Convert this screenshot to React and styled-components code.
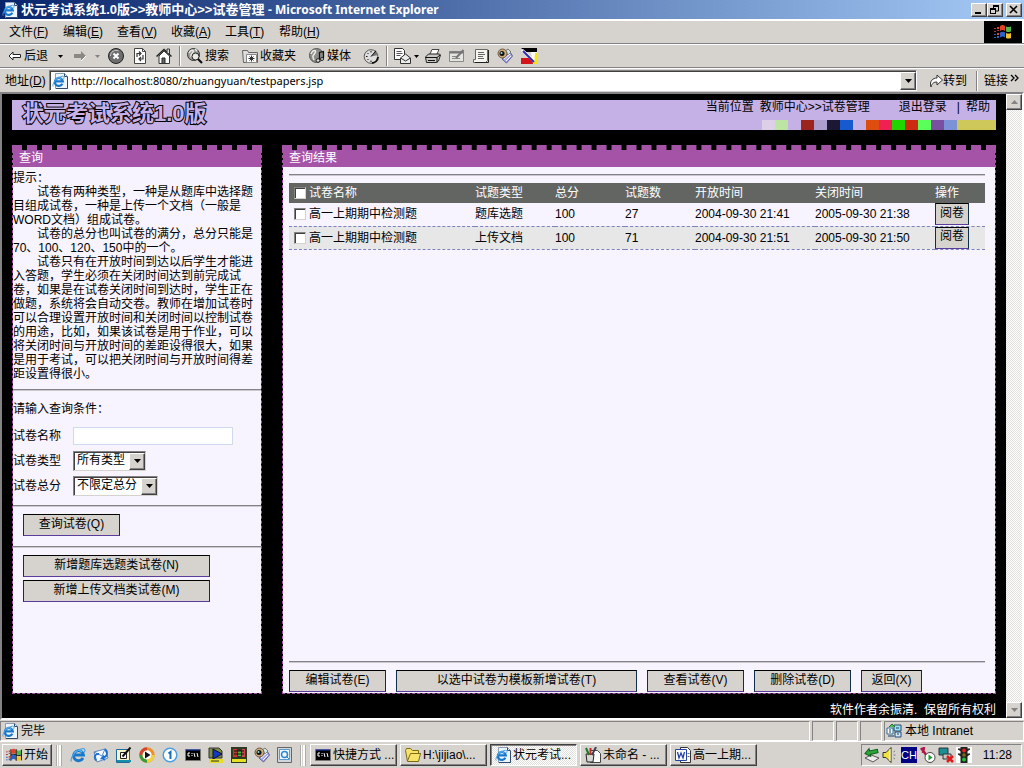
import React from 'react';
import styled, { createGlobalStyle, css } from 'styled-components';

const Global = createGlobalStyle`
  * { box-sizing: border-box; }
  body { margin: 0; font: 12px/14px "Liberation Sans", "Noto Sans CJK SC", sans-serif; color: #000; text-spacing-trim: space-all; }
  button, input, select { font: inherit; color: inherit; margin: 0; border-radius: 0; }
`;

const face = '#d6d3ce';
const raised = css`
  border: 1px solid; border-color: #fff #404040 #404040 #fff;
  box-shadow: inset -1px -1px #848284;
`;
const sunken = css`
  border: 1px solid; border-color: #848284 #fff #fff #848284;
`;

const Screen = styled.div`
  display: flex; flex-direction: column; min-height: 100vh; background: ${face};
`;
const TitleBar = styled.header`
  display: flex; align-items: center; gap: 3px; height: 19px; padding: 0 2px;
  background: linear-gradient(90deg, #08246b, #a5cbf7); color: #fff;
  font-size: 12px; font-weight: bold;
`;
const TitleText = styled.h1`
  flex: 1; margin: 0; font-size: 13px; line-height: 18px; font-weight: bold; white-space: nowrap;
`;
const AppName = styled.span`font: bold 12px/18px "Noto Sans", sans-serif;`;
const WindowButton = styled.button`
  ${raised} display: grid; place-items: center; width: 16px; height: 14px; padding: 0;
  background: ${face}; margin-left: ${p => (p.$apart ? '0' : '-3px')};
`;
const Bar = styled.div`
  display: flex; align-items: center; height: 24px;
  border-top: 1px solid #fff; border-bottom: 1px solid #848284;
`;
const MenuBar = styled(Bar)`
  height: 25px; border-top: 2px solid #fff; align-items: stretch;
`;
const MenuItem = styled.button`
  min-width: 54px; padding: 0 0 0 9px; border: 0; background: none; text-align: left; white-space: nowrap;
`;
const Throbber = styled.div`
  display: grid; place-items: center; width: 40px; margin-left: auto; background: #000;
  border: solid #fff; border-width: 0 2px 0 0;
`;
const ToolBar = styled(Bar)`padding-left: 8px;`;
const Tool = styled.button`
  display: flex; align-items: center; gap: 2px; width: ${p => p.$w || 24}px; padding: 0;
  border: 0; background: none; white-space: nowrap; text-align: left;
`;
const Divider = styled.span`
  width: 2px; height: 20px; margin: 0 6px 0 0; border-left: 1px solid #848284; border-right: 1px solid #fff;
`;
const AddressBar = styled(Bar)`padding-left: 5px; border-bottom: 0;`;
const AddressLabel = styled.label`width: 44px; white-space: nowrap;`;
const AddressField = styled.div`
  display: flex; align-items: center; flex: 1; height: 21px; padding-left: 2px; background: #fff;
  border: 1px solid; border-color: #848284 #fff #fff #848284; box-shadow: inset 1px 1px #404040;
`;
const AddressInput = styled.input`
  flex: 1; min-width: 0; height: 17px; padding: 0 0 0 3px; border: 0; background: transparent; outline: 0;
  font: 11px/16px "Noto Sans", sans-serif;
`;
const DropButton = styled.button`
  ${raised} display: grid; place-items: center; width: 16px; height: 18px; padding: 0; background: ${face};
`;
const GoButton = styled(Tool)`margin-left: 12px; width: 47px; gap: 0;`;
const Viewport = styled.main`
  display: flex; flex: 1; border: 2px solid; border-color: #848284 #fff #fff #848284; background: #000;
`;
const Page = styled.div`
  flex: 1; min-width: 0; display: flex; flex-direction: column; padding: 6px 10px 0;
`;
const ScrollBar = styled.div`
  display: flex; flex-direction: column; justify-content: space-between; width: 16px;
  background: repeating-conic-gradient(#fff 0 25%, #e2e0dc 0 50%) 0 0 / 2px 2px;
`;
const ScrollButton = styled.button`
  ${raised} display: grid; place-items: center; width: 16px; height: 16px; padding: 0; background: ${face};
`;
const Banner = styled.div`
  display: flex; justify-content: space-between; height: 30px; margin-bottom: 15px; background: #c6b1e7;
`;
const Brand = styled.div`
  padding-left: 10px; font-size: 22px; line-height: 28px; font-weight: bold; color: #c6b1e7;
  -webkit-text-stroke: 2px #000; paint-order: stroke fill; white-space: nowrap;
`;
const BannerSide = styled.div`
  display: flex; flex-direction: column; justify-content: space-between; align-items: flex-end; white-space: nowrap;
`;
const Crumbs = styled.nav`display: flex; padding-right: 6px;`;
const Crumb = styled.span`margin-right: ${p => p.$gap}px;`;
const PageLink = styled.a`color: #000; text-decoration: none;`;
const Swatches = styled.div`display: flex; height: 10px;`;
const Swatch = styled.i`width: 13px; background: ${p => p.$c};`;

const Panels = styled.div`display: flex; flex: 1; gap: 20px;`;
const Panel = styled.section`
  display: flex; flex-direction: column; background: #f7f3ff; background-clip: padding-box;
  border: 1px dashed #a553a7; border-top: 5px dashed #a553a7;
  ${p => (p.$side ? 'width: 250px;' : 'flex: 1; min-width: 0;')}
`;
const PanelTitle = styled.h2`
  margin: 0; height: 17px; padding-left: 6px; background: #a553a7; color: #fff;
  font-size: 12px; line-height: 17px; font-weight: normal;
`;
const Rule = styled.hr`
  width: 100%; height: 2px; margin: 7px 0; border: 0; border-top: 1px solid #848284; background: #cdc9d2;
`;
const Tips = styled.div`padding: 4px 0 1px; p { margin: 0; text-indent: 24px; } p:first-child { text-indent: 0; }`;
const FormTitle = styled.p`margin: 4px 0 7px;`;
const Field = styled.div`display: flex; align-items: center; height: 25px;`;
const FieldLabel = styled.label`width: 60px;`;
const TextInput = styled.input`
  width: 160px; height: 18px; padding: 0 2px; border: 1px solid #cedbef; background: #fff;
`;
const SelectBox = styled.span`
  display: grid; width: ${p => p.$w}px; height: 20px; align-items: stretch;
  > * { grid-area: 1 / 1; }
`;
const Select = styled.select`
  appearance: none; width: 100%; padding: 0 0 2px 3px; background: #fff; border: 1px solid;
  border-color: #848284 #d6d3ce #d6d3ce #848284; box-shadow: inset 1px 1px #404040;
`;
const SelectArrow = styled.span`
  ${raised} display: grid; place-items: center; justify-self: end; width: 16px; margin: 2px 1px 1px 0;
  background: ${face}; pointer-events: none;
`;
const PageButton = styled.button`
  width: ${p => p.$w}px; height: 22px; padding: 0 0 3px; background: ${face}; white-space: nowrap;
  border: 1px solid; border-color: #000 #10304a #5a3c9c #10304a;
`;
const Stack = styled.div`display: flex; flex-direction: column; gap: 3px; padding: 0 10px; margin-bottom: ${p => p.$after || 0}px;`;
const Results = styled.div`
  display: flex; flex-direction: column; flex: 1; padding: 0 10px 1px 6px;
`;
const Actions = styled.div`display: flex; gap: 10px;`;
const Spring = styled.div`flex: 1;`;
const Table = styled.table`
  width: 100%; table-layout: fixed; border-collapse: collapse;
  th, td { padding: 0; text-align: left; font-weight: normal; white-space: nowrap; vertical-align: middle; }
`;
const HeadRow = styled.tr`height: 20px; background: #636563; color: #fff;`;
const Row = styled.tr`
  height: 23px; border-bottom: 1px dashed #7b82bd; background: ${p => (p.$alt ? '#e7e7e7' : 'transparent')};
`;
const Check = styled.label`display: flex; align-items: center; gap: 3px; padding-left: 5px;`;
const CheckBox = styled.input`
  appearance: none; width: 12px; height: 12px; background: #fff; border: 1px solid;
  border-color: #848284 #d6d3ce #d6d3ce #848284; box-shadow: inset 1px 1px #404040;
`;
const Copyright = styled.footer`color: #fff; text-align: right; line-height: 14px; padding: 9px 0 1px;`;

const StatusBar = styled.div`display: flex; gap: 2px; height: 21px; padding-top: 1px;`;
const Pane = styled.div`
  ${sunken} display: flex; align-items: center; gap: 3px; padding: 0 1px;
  ${p => (p.$w ? `width: ${p.$w}px;` : 'flex: 1;')}
`;
const TaskBar = styled.footer`
  display: flex; align-items: center; height: 27px; padding: 0 2px; border-top: 1px solid #fff;
`;
const StartButton = styled.button`
  ${raised} display: flex; align-items: center; gap: 2px; width: 50px; height: 22px; padding: 0 3px; background: ${face}; white-space: nowrap;
`;
const Grip = styled.span`
  width: 6px; height: 21px; margin: 0 4px; border-left: 2px groove #fff; border-right: 3px ridge #fff;
`;
const Quick = styled.button`
  display: grid; place-items: center; width: 23px; height: 20px; padding: 0; border: 0; background: none;
`;
const Tasks = styled.div`display: flex; flex: 1; gap: 3px;`;
const Task = styled.button`
  ${raised} display: flex; align-items: center; gap: 2px; width: 87px; height: 22px; padding: 0 2px 0 4px; text-align: left;
  background: ${face}; white-space: nowrap; overflow: hidden;
  ${p => p.$on && css`
    border-color: #404040 #fff #fff #404040; box-shadow: inset 1px 1px #848284;
    background: repeating-conic-gradient(#fff 0 25%, #e2e0dc 0 50%) 0 0 / 2px 2px;
  `}
`;
const Tray = styled.div`
  ${sunken} display: flex; align-items: center; gap: 2px; width: 161px; height: 22px; padding: 0 9px 0 2px;
`;
const Lang = styled.span`width: 16px; height: 16px; margin: 0 1px; background: #000084; color: #fff; text-align: center; line-height: 16px; font-size: 11px;`;
const Clock = styled.time`margin-left: auto;`;

const Svg = ({ w = 16, h = 16, children }) => (
  <svg width={w} height={h} viewBox={`0 0 ${w} ${h}`} fill="none" aria-hidden="true" style={{ flexShrink: 0 }}>{children}</svg>
);
const Caret = ({ color = '#000' }) => <Svg w={7} h={4}><path d="M0 0h7L3.5 4z" fill={color} /></Svg>;
const SmallCaret = ({ color = '#000' }) => <Svg w={5} h={3}><path d="M0 0h5L2.500 3z" fill={color} /></Svg>;

const EGlyph = () => (
  <>
    <path d="M13 11a5 5 0 1 1 .5-3H5" stroke="#1878cc" strokeWidth="2.800" />
    <path d="M4 6a5 5 0 0 1 8-1" stroke="#63c3f7" strokeWidth="1.200" />
    <path d="M1.500 14.500C-.5 12 5 3 13 1.500c3 0 2 2.500 1 4" stroke="#4a9fe0" strokeWidth="1.200" />
  </>
);
const IEIcon = () => <Svg><EGlyph /></Svg>;
const IEPage = () => (
  <Svg>
    <path d="M3.500.5h9l3 3v12h-12z" fill="#eef4fc" stroke="#8c9db8" /><path d="M12.500.5v3h3M15.500 4v11.500H4" stroke="#31496b" />
    <g transform="translate(0 2) scale(.8)"><EGlyph /></g>
  </Svg>
);
const Flag = ({ w = 18 }) => (
  <svg width={w} height="16" viewBox="0 0 18 16" aria-hidden="true">
    <path d="M6 2c2-1.500 3.500-1.500 5 0v5c-2-1.300-3-1.300-5 0z" fill="#e0442a" />
    <path d="M12 2.500c2 .8 3 .8 5 0v5c-2 .8-3 .8-5 0z" fill="#53b848" />
    <path d="M6 8.500c2-1.300 3.500-1.300 5 0v5c-2-1.300-3-1.300-5 0z" fill="#2d62c8" />
    <path d="M12 9c2 .8 3 .8 5 0v5c-2 .8-3 .8-5 0z" fill="#f3c52b" />
    <path d="M5.500 1.500v13M11.500 1.500v13M17.500 2v12M5.500 8c3-1.500 4-1 6 0s4 .8 6 0" stroke="#000" fill="none" />
    <path d="M3 3h2v2H3zM3 9h2v2H3z" fill="#e0442a" /><path d="M0 4h2v1H0zM0 7h2v1H0zM3 6h2v1H3z" fill="#a33" />
    <path d="M0 10h2v1H0zM3 12h2v2H3zM0 13h2v1H0z" fill="#2d62c8" />
  </svg>
);
const BackIcon = () => <Svg w={14}><path d="M1 8l4-4v2.500h7.500v3H5V12z" fill="#fff" stroke="#222" /></Svg>;
const ForwardIcon = () => <Svg w={14}><path d="M13 8L8 3v3H1v4h7v3z" fill="#8a8885" /><path d="M8 13l5-5" stroke="#fff" /></Svg>;
const StopIcon = () => (
  <Svg><circle cx="8" cy="8" r="7.500" fill="#6d6d6d" stroke="#222" /><path d="M2.500 8a5.500 5.500 0 0 1 8-5" stroke="#ccc" />
    <path d="M5.500 5.500l5 5M10.500 5.500l-5 5" stroke="#fff" strokeWidth="2" /></Svg>
);
const RefreshIcon = () => (
  <Svg><path d="M2.500.5h8l3 3v12h-11z" fill="#fff" stroke="#444" /><path d="M10.500.5v3h3" stroke="#444" />
    <path d="M5 9V5.500h3M7 3.500l2 2-2 2M11 7v4H8M9 9l-2 2 2 2" stroke="#333" strokeWidth="1.200" /></Svg>
);
const HomeIcon = () => (
  <Svg><path d="M3 8v7.500h10.500V8L8 3z" fill="#fff" stroke="#333" /><path d="M.5 8.500L8 1.500l7.500 7" stroke="#222" strokeWidth="1.500" />
    <path d="M11 4V1h2.500v5" stroke="#333" fill="#ddd" /><path d="M6 15v-5h3v5" fill="#666" stroke="#222" /></Svg>
);
const SearchIcon = () => (
  <Svg><circle cx="6.500" cy="6.500" r="6" fill="#9b9b97" stroke="#333" /><path d="M2 5c2-4 5-3 4-1s-3 3-2 5M8 1l2 2" stroke="#eee" strokeWidth="1.500" />
    <circle cx="8.500" cy="8.500" r="3.500" fill="#e9e9e6" stroke="#222" /><path d="M11 11l4 4" stroke="#111" strokeWidth="2.200" /></Svg>
);
const FavoritesIcon = () => (
  <Svg><path d="M.5 2.500h5l1 2h9v10H1.500z" fill="#ddd" stroke="#666" /><path d="M4.500 6.500h10v8h-10z" fill="#fff" stroke="#888" />
    <path d="M9.500 7.500v6M6.500 10.500h6M7.500 8.500l4 4M11.500 8.500l-4 4" stroke="#333" /></Svg>
);
const MediaIcon = () => (
  <Svg><circle cx="7.500" cy="7.500" r="7" fill="#8b8b88" stroke="#555" /><path d="M2 6c2-5 6-4 4-1s-3 3-1 7" stroke="#eee" strokeWidth="1.500" />
    <path d="M10.500 12V4.500l4-1v7" stroke="#111" strokeWidth="1.200" /><circle cx="9" cy="12.500" r="1.800" fill="#ddd" stroke="#222" /><circle cx="13" cy="11" r="1.500" fill="#ddd" stroke="#222" /></Svg>
);
const HistoryIcon = () => (
  <Svg><circle cx="8" cy="8.500" r="6.800" fill="#dedede" stroke="#555" /><path d="M8 8.500L12.500 2l3 5z" fill="#777" />
    <path d="M8 3v1.500M3 8.500h1.500M8 12.500V14M4.500 5l1 1M4.500 12l1-1M8 8.500L13 3" stroke="#111" /><path d="M9 15a6.500 6.500 0 0 0 6-6" stroke="#111" strokeWidth="2" /></Svg>
);
const MailIcon = () => (
  <Svg w={18}><path d="M.5.5h8l2 2v9H.5z" fill="#fff" stroke="#333" /><path d="M2.500 3.500h5M2.500 5.500h6M2.500 7.500h4" stroke="#555" />
    <path d="M6.500 10l5-4 5 4v5.500h-10z" fill="#ececec" stroke="#333" /><path d="M6.500 10l5 3 5-3" stroke="#333" /></Svg>
);
const PrintIcon = () => (
  <Svg><path d="M5 6l2-4.500h7L12 6" fill="#fff" stroke="#444" /><path d="M.5 9l3-3h11l1 1-2 6-2 1.500H1.500z" fill="#c7c7c3" stroke="#222" />
    <path d="M1 9.500h11l3-2.500M12 9.500v5M3 12.500h7" stroke="#111" /></Svg>
);
const EditIcon = () => (
  <Svg><path d="M.5 3.500h14v10H.5z" fill="#e4e4e0" stroke="#888" /><path d="M.5 4.500h14" stroke="#777" strokeWidth="2" />
    <path d="M3 8.500h5M3 10.500h8" stroke="#888" /><path d="M7 10l7.500-8" stroke="#777" strokeWidth="2" /></Svg>
);
const NotesIcon = () => (
  <Svg><path d="M2.500 1.500h12v11l-2 2H.5v-3h2z" fill="#f4f4f1" stroke="#666" /><path d="M5 4.500h6M5 6.500h7M5 8.500h5M5 10.500h6" stroke="#666" /><path d="M15.500 2v12.500H2" stroke="#222" /></Svg>
);
const ContactIcon = () => (
  <Svg><path d="M5 11l8-7 2.500 4-6 7z" fill="#a9a9e8" stroke="#5b5b9b" /><path d="M8 3l3-2 3 3-3 3z" fill="#cfe8e4" stroke="#777" /><path d="M7 11l6-5M9 13l5-5" stroke="#fff" />
    <circle cx="5.500" cy="5.500" r="4.500" fill="#c9ad7d" stroke="#6b5540" /><circle cx="5" cy="5.500" r="2.500" fill="#111" /><circle cx="4.500" cy="5" r="1" fill="#8fe7e0" /></Svg>
);
const PaintIcon = () => (
  <Svg><path d="M0 0h16v4H5z" fill="#000" /><path d="M0 10h13v6H0z" fill="#d3141a" /><path d="M10 4h6v12h-4z" fill="#fff" /><path d="M14 5h2v11h-3z" fill="#f7e51c" />
    <path d="M1 2l12 11" stroke="#fff" strokeWidth="3" /><path d="M2 3l11 11" stroke="#2d2bb5" strokeWidth="2" /></Svg>
);
const GoIcon = () => <Svg w={14}><path d="M2 14c-2-6 2-9 6-9V2l5.500 5L8 12V9c-3 0-5 1-6 5z" fill="#fff" stroke="#333" /></Svg>;
const OutlookIcon = () => (
  <Svg><path d="M1 5l11-3 3 9-11 4z" fill="#f5faff" stroke="#5c86c4" /><path d="M1 5l8 4 3-7" stroke="#5c86c4" />
    <path d="M3 13.500c-3-4 0-7 3-6.500M12 2c3 3 3 8-3 9l2-2.500M9 11l3 2" stroke="#1970d0" strokeWidth="1.800" /></Svg>
);
const DesktopIcon = () => (
  <Svg><path d="M.5 2.500h13v13H.5z" fill="#f8f4c8" stroke="#1d6a9c" /><path d="M1 13h14v2H1z" fill="#1590a8" /><path d="M4.500 5.500h6v6h-6z" fill="#fff" stroke="#222" /><path d="M6.500 9.500l8-9" stroke="#111" strokeWidth="2" /></Svg>
);
const PlayerIcon = () => (
  <Svg><circle cx="8" cy="8" r="6.200" stroke="#e8902c" strokeWidth="3" fill="#fff" /><path d="M8 14.200A6.200 6.200 0 0 1 1.800 8" stroke="#3a9a3c" strokeWidth="3" /><path d="M1.800 8A6.200 6.200 0 0 1 8 1.800" stroke="#d3462c" strokeWidth="3" /><path d="M14.200 8A6.200 6.200 0 0 1 8 14.200" stroke="#f2d13c" strokeWidth="3" /><path d="M6 4.500l5.500 3.500L6 11.500z" fill="#111" /></Svg>
);
const OneIcon = () => (
  <Svg><circle cx="8" cy="8" r="6.800" fill="#fff" stroke="#4a9fe0" strokeWidth="1.500" /><path d="M6.500 6.500L8.500 5v7" stroke="#1470bd" strokeWidth="2" /></Svg>
);
const ConsoleIcon = () => (
  <Svg><path d="M.5 2.500h15v11H.5z" fill="#000" stroke="#777" /><path d="M1 3h14" stroke="#1a3db5" /><path d="M5 6H3v3h2M7 6v1M7 8v1M9 6l1 4M12 6l1 4" stroke="#fff" /></Svg>
);
const PlayFileIcon = () => (
  <Svg><path d="M1 1h10l3 3v7H1z" fill="#7d8c4a" stroke="#333" /><path d="M5 2l9 5-9 5z" fill="#1338c9" stroke="#111" /><path d="M1 12h14v4H1z" fill="#e6df23" /><path d="M3 14h8" stroke="#333" /></Svg>
);
const FilmIcon = () => (
  <Svg><path d="M0 0h16v16H0z" fill="#2e3b23" /><path d="M2 2h4v8H2z" fill="#c33" /><path d="M7 4h3v5H7z" fill="#3fc23a" /><path d="M11 2h3v8h-3z" fill="#c45" /><path d="M1 12h14v3H1z" fill="#e6df23" /><path d="M3 4h10M3 7h10" stroke="#111" /></Svg>
);
const LookIcon = () => (
  <Svg><path d="M.5.5h14v15H.5z" fill="#cfd6dc" stroke="#666" /><path d="M2.500 2.500h10v10h-10z" fill="#eef7ff" stroke="#5b9bd0" /><circle cx="7.500" cy="7.500" r="3" stroke="#2c87cf" strokeWidth="1.500" /><path d="M10 10l2 2" stroke="#2c87cf" /></Svg>
);
const FolderIcon = () => <Svg><path d="M.5 3.500l1-2h4l2 2h6v3h2l-2 8H2.500z" fill="#f7e36b" stroke="#7d6a14" /><path d="M2.500 14l3-7.500h10" stroke="#7d6a14" /></Svg>;
const PaintFileIcon = () => (
  <Svg><path d="M5.500 3.500h7l3 3v9h-10z" fill="#fff" stroke="#444" /><path d="M1 7h8l-1 8H2z" fill="#d8d8d8" stroke="#222" /><path d="M1 1l3 7" stroke="#1a7a2a" strokeWidth="2" /><path d="M5.500 1v7" stroke="#c22" strokeWidth="2" /><path d="M11 0L7 8" stroke="#345" strokeWidth="2" /></Svg>
);
const WordIcon = () => (
  <Svg><path d="M5.500.5h7l3 3v12h-10z" fill="#fff" stroke="#333" /><path d="M.5 2.500h11v11H.5z" fill="#fff" stroke="#2443a5" /><path d="M2.500 5l1.500 6 2-5 2 5 1.500-6" stroke="#2443a5" strokeWidth="1.300" /><path d="M12.500 6.500h2M12.500 9.500h2" stroke="#667" /></Svg>
);
const IntranetIcon = () => (
  <Svg><path d="M1 5h6v6H1z" fill="#fff" stroke="#316a9c" /><path d="M8 2h7v6H8z" fill="#9fe2f2" stroke="#244a6b" /><path d="M9 9h6v5H9z" fill="#cfe7ff" stroke="#244a6b" /><path d="M3 4l3-3 3 3" fill="#4fbf5a" stroke="#21702c" /><path d="M2 13h6M3 7h2M3 9h2M11 11h2M10 5h3" stroke="#163f66" /></Svg>
);
const EjectIcon = () => (
  <Svg><path d="M1 11l6-3 8 3-6 4z" fill="#eee" stroke="#555" /><path d="M1 5l5-4v2.500h8V7H6v2z" fill="#2ba63b" stroke="#0f5a1b" transform="rotate(-12 8 6)" /></Svg>
);
const SpeakerIcon = () => <Svg><path d="M1 5.500h3l5-5v15l-5-5H1z" fill="#f4e23c" stroke="#333" /><path d="M8 2v12" stroke="#fff" /><path d="M11.500 5l1.500-1M11.500 8h2M11.500 11l1.500 1" stroke="#777" /></Svg>;
const ServiceIcon = () => <Svg><path d="M1 1l6 8M4 0L3 6" stroke="#b0184a" strokeWidth="2.500" /><circle cx="10" cy="10.500" r="5" fill="#fff" stroke="#444" /><path d="M8.500 7.500l4 3-4 3z" fill="#1b9a2a" /></Svg>;
const OfflineIcon = () => <Svg><path d="M1 1h9v7H1z" fill="#1b8f96" stroke="#333" /><path d="M5 7h8v5H5z" fill="#c7c7c7" stroke="#333" /><path d="M9 9l6 6M15 9l-6 6" stroke="#e01b1b" strokeWidth="2.500" /></Svg>;
const TrafficIcon = () => <Svg><path d="M0 0h16v16H0z" fill="#fff" /><path d="M5 0h6v16H5zM2 2h3v2zM11 4l3-2h-3zM2 7h3v2zM11 9l3-2h-3z" fill="#222" stroke="#222" /><circle cx="8" cy="3.500" r="2" fill="#e32222" /><circle cx="8" cy="8" r="1.800" fill="#7a6b12" /><circle cx="8" cy="12.500" r="2" fill="#1dc02e" /></Svg>;

const menus = [['文件', 'F'], ['编辑', 'E'], ['查看', 'V'], ['收藏', 'A'], ['工具', 'T'], ['帮助', 'H']];
const swatches = ['#dccfe7', '#bde3a5', 'transparent', '#9c241c', '#ad9ece', '#1c1833', '#1759ce', 'transparent',
  '#de4d10', '#ef2052', '#21d600', '#ce2c10', '#5aff5a', '#7b4fa0', '#7b92d6', '#cec75a', '#cec75a', '#cec75a'];
const papers = [
  ['高一上期期中检测题', '题库选题', '100', '27', '2004-09-30 21:41', '2005-09-30 21:38'],
  ['高一上期期中检测题', '上传文档', '100', '71', '2004-09-30 21:51', '2005-09-30 21:50'],
];
const actions = [['编辑试卷(E)', 97], ['以选中试卷为模板新增试卷(T)', 241], ['查看试卷(V)', 97], ['删除试卷(D)', 97], ['返回(X)', 61]];
const quick = [IEIcon, OutlookIcon, DesktopIcon, PlayerIcon, OneIcon, ConsoleIcon, PlayFileIcon, FilmIcon, ContactIcon, LookIcon];
const tasks = [[ConsoleIcon, '快捷方式 ...'], [FolderIcon, 'H:\\jijiao\\...'], [IEPage, '状元考试...', true], [PaintFileIcon, '未命名 - ...'], [WordIcon, '高一上期...']];

function QueryPanel() {
  return (
    <Panel $side>
      <PanelTitle>查询</PanelTitle>
      <Tips>
        <p>提示：</p>
        <p>试卷有两种类型，一种是从题库中选择题目组成试卷，一种是上传一个文档（一般是WORD文档）组成试卷。</p>
        <p>试卷的总分也叫试卷的满分，总分只能是70、100、120、150中的一个。</p>
        <p>试卷只有在开放时间到达以后学生才能进入答题，学生必须在关闭时间达到前完成试卷，如果是在试卷关闭时间到达时，学生正在做题，系统将会自动交卷。教师在增加试卷时可以合理设置开放时间和关闭时间以控制试卷的用途，比如，如果该试卷是用于作业，可以将关闭时间与开放时间的差距设得很大，如果是用于考试，可以把关闭时间与开放时间得差距设置得很小。</p>
      </Tips>
      <Rule />
      <FormTitle>请输入查询条件：</FormTitle>
      <Field><FieldLabel htmlFor="name">试卷名称</FieldLabel><TextInput id="name" /></Field>
      <Field>
        <FieldLabel htmlFor="type">试卷类型</FieldLabel>
        <SelectBox $w={73}><Select id="type"><option>所有类型</option></Select><SelectArrow><Caret /></SelectArrow></SelectBox>
      </Field>
      <Field>
        <FieldLabel htmlFor="score">试卷总分</FieldLabel>
        <SelectBox $w={85}><Select id="score"><option>不限定总分</option></Select><SelectArrow><Caret /></SelectArrow></SelectBox>
      </Field>
      <Rule />
      <Stack $after={3}><PageButton $w={97}>查询试卷(Q)</PageButton></Stack>
      <Rule />
      <Stack>
        <PageButton $w={187}>新增题库选题类试卷(N)</PageButton>
        <PageButton $w={187}>新增上传文档类试卷(M)</PageButton>
      </Stack>
    </Panel>
  );
}

function ResultPanel() {
  return (
    <Panel>
      <PanelTitle>查询结果</PanelTitle>
      <Results>
        <Rule />
        <Table>
          <colgroup>
            <col /><col width="80" /><col width="70" /><col width="70" /><col width="120" /><col width="120" /><col width="50" />
          </colgroup>
          <thead>
            <HeadRow>
              <th><Check><CheckBox type="checkbox" />试卷名称</Check></th>
              <th>试题类型</th><th>总分</th><th>试题数</th><th>开放时间</th><th>关闭时间</th><th>操作</th>
            </HeadRow>
          </thead>
          <tbody>
            {papers.map(([name, ...rest], i) => (
              <Row key={i} $alt={i % 2 === 1}>
                <td><Check><CheckBox type="checkbox" />{name}</Check></td>
                {rest.map((cell, n) => <td key={n}>{cell}</td>)}
                <td><PageButton $w={34}>阅卷</PageButton></td>
              </Row>
            ))}
          </tbody>
        </Table>
        <Spring />
        <Rule />
        <Actions>{actions.map(([text, w]) => <PageButton key={text} $w={w}>{text}</PageButton>)}</Actions>
      </Results>
    </Panel>
  );
}

export default function App() {
  return (
    <Screen>
      <Global />
      <TitleBar>
        <IEPage />
        <TitleText>状元考试系统1.0版&gt;&gt;教师中心&gt;&gt;试卷管理 <AppName>- Microsoft Internet Explorer</AppName></TitleText>
        <WindowButton $apart aria-label="最小化"><Svg w={10} h={9}><path d="M1 7h6v2H1z" fill="#000" /></Svg></WindowButton>
        <WindowButton aria-label="还原"><Svg w={10} h={9}><path d="M3.500 0v4M3 .5h6M3 1.500h6M8.500 1v5H6M.5 3v6M0 3.500h6M0 4.500h6M5.500 4v5M0 8.500h6" stroke="#000" /></Svg></WindowButton>
        <WindowButton $apart aria-label="关闭"><Svg w={10} h={9}><path d="M1 1l7 7M8 1L1 8" stroke="#000" strokeWidth="1.600" /></Svg></WindowButton>
      </TitleBar>
      <MenuBar>
        {menus.map(([t, k]) => <MenuItem key={k}>{t}(<u>{k}</u>)</MenuItem>)}
        <Throbber><Flag w={18} /></Throbber>
      </MenuBar>
      <ToolBar>
        <Tool $w={50}><BackIcon />后退</Tool><Tool $w={15} aria-label="后退列表"><SmallCaret /></Tool>
        <Tool $w={22} aria-label="前进"><ForwardIcon /></Tool><Tool $w={13} aria-label="前进列表"><SmallCaret color="#848284" /></Tool>
        <Tool aria-label="停止"><StopIcon /></Tool><Tool aria-label="刷新"><RefreshIcon /></Tool><Tool $w={23} aria-label="主页"><HomeIcon /></Tool>
        <Divider />
        <Tool $w={55}><SearchIcon />搜索</Tool><Tool $w={67}><FavoritesIcon />收藏夹</Tool><Tool $w={54}><MediaIcon />媒体</Tool>
        <Tool $w={23} aria-label="历史"><HistoryIcon /></Tool>
        <Divider />
        <Tool $w={31} aria-label="邮件"><MailIcon /><SmallCaret /></Tool><Tool aria-label="打印"><PrintIcon /></Tool>
        <Tool aria-label="编辑"><EditIcon /></Tool><Tool aria-label="讨论"><NotesIcon /></Tool><Tool aria-label="联系人"><ContactIcon /></Tool>
        <Tool aria-label="绘图"><PaintIcon /></Tool>
      </ToolBar>
      <AddressBar>
        <AddressLabel htmlFor="address">地址(<u>D</u>)</AddressLabel>
        <AddressField>
          <IEPage />
          <AddressInput id="address" defaultValue="http://localhost:8080/zhuangyuan/testpapers.jsp" />
          <DropButton aria-label="地址列表"><Caret /></DropButton>
        </AddressField>
        <GoButton><GoIcon />转到</GoButton>
        <Divider />
        <Tool $w={40}>链接 <Svg w={10}><path d="M1 2l3 3-3 3M5 2l3 3-3 3" stroke="#000" strokeWidth="1.300" /></Svg></Tool>
      </AddressBar>
      <Viewport>
        <Page>
          <Banner>
            <Brand>状元考试系统1.0版</Brand>
            <BannerSide>
              <Crumbs>
                <Crumb $gap={6}>当前位置</Crumb><Crumb $gap={29}>教师中心&gt;&gt;试卷管理</Crumb>
                <PageLink href="#logout">退出登录</PageLink><Crumb $gap={6}>&nbsp;&nbsp; |</Crumb><PageLink href="#help">帮助</PageLink>
              </Crumbs>
              <Swatches>{swatches.map((c, i) => <Swatch key={i} $c={c} />)}</Swatches>
            </BannerSide>
          </Banner>
          <Panels><QueryPanel /><ResultPanel /></Panels>
          <Copyright>软件作者余振清.&nbsp; 保留所有权利</Copyright>
        </Page>
        <ScrollBar>
          <ScrollButton aria-label="向上"><Svg w={7} h={4}><path d="M0 4h7L3.500 0z" fill="#848284" /></Svg></ScrollButton>
          <ScrollButton aria-label="向下"><Caret color="#848284" /></ScrollButton>
        </ScrollBar>
      </Viewport>
      <StatusBar>
        <Pane><IEPage />完毕</Pane><Pane $w={22} /><Pane $w={22} /><Pane $w={22} />
        <Pane $w={140}><IntranetIcon />本地 Intranet</Pane>
      </StatusBar>
      <TaskBar>
        <StartButton><Flag w={18} />开始</StartButton>
        <Grip />
        {quick.map((Icon, i) => <Quick key={i} aria-label={`快速启动 ${i + 1}`}><Icon /></Quick>)}
        <Grip />
        <Tasks>{tasks.map(([Icon, t, on]) => <Task key={t} $on={on}><Icon />{t}</Task>)}</Tasks>
        <Tray><EjectIcon /><SpeakerIcon /><Lang>CH</Lang><ServiceIcon /><OfflineIcon /><TrafficIcon /><Clock>11:28</Clock></Tray>
      </TaskBar>
    </Screen>
  );
}
